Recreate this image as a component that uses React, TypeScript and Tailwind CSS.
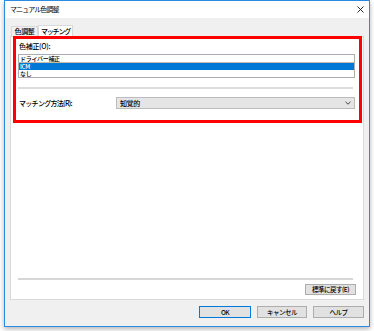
const jp = "font-['Noto_Sans_CJK_JP',sans-serif]";

function DlgButton({ label, w, primary }: { label: string; w: string; primary?: boolean }) {
  return (
    <div
      className={`${w} h-[12px] flex items-center justify-center bg-[#e1e1e1] border text-[6.5px] font-medium leading-none tracking-[-0.5px] ${
        primary ? 'border-[#0078d7]' : 'border-[#adadad]'
      }`}>
      {label}
    </div>
  );
}

export default function App() {
  return (
    <div className={`w-[374px] h-[331px] bg-white pl-[4px] text-black ${jp}`}>
      <div className="w-[366px] h-[327px] border border-[#2b8be0] bg-[#f0f0f0] flex flex-col shadow-[0_2px_5px_rgba(0,0,0,0.3)]">
        {/* title bar */}
        <div className="h-[17px] bg-white flex items-center justify-between pl-[5px] pr-[5px]">
          <span className="text-[7px] tracking-[-0.9px] leading-none">マニュアル色調整</span>
          <svg width="7" height="7" viewBox="0 0 7 7">
            <path d="M0.5 0.5 L6.5 6.5 M6.5 0.5 L0.5 6.5" stroke="#111" strokeWidth="0.9" />
          </svg>
        </div>

        <div className="flex-1 flex flex-col px-[5px] pt-[6px]">
          {/* tabs */}
          <div className="flex items-end h-[12px] ml-[1px]">
            <div className="w-[27px] h-[10px] border border-b-0 border-[#d9d9d9] flex items-center justify-center text-[7px] font-medium leading-none tracking-[-0.4px]">
              色調整
            </div>
            <div className="w-[35px] h-[12px] -mb-px relative z-10 bg-white border border-b-0 border-[#d9d9d9] flex items-center justify-center text-[7px] font-medium leading-none tracking-[-1.2px]">
              マッチング
            </div>
          </div>

          {/* tab panel */}
          <div className="h-[264px] bg-white border border-[#d9d9d9] flex flex-col">
            <div className="-mt-px ml-[2px] w-[349px] h-[87px] border-[3px] border-[#f00] relative z-20 flex flex-col pl-[2px] pt-[3px]">
              <div className="pl-[1px] text-[7px] font-medium leading-[8px] tracking-[-0.3px]">色補正(O):</div>
              <div className="mt-[4px] w-[337px] h-[24px] border border-[#abadb3] flex flex-col text-[6px] font-medium leading-[6px] tracking-[-0.3px]">
                <div className="h-[7px] flex items-center pl-[1px]">ドライバー補正</div>
                <div className="h-[1px] bg-[#c9b9a9]" />
                <div className="h-[7px] flex items-center pl-[1px] bg-[#0078d7] text-white">ICM</div>
                <div className="h-[7px] flex items-center pl-[1px]">なし</div>
              </div>
              <div className="mt-[9px] w-[335px] h-[2px] bg-[#dcdcdc]" />
              <div className="mt-[8px] flex items-center">
                <div className="w-[98px] pl-[1px] text-[7px] font-medium leading-none tracking-[-0.7px]">マッチング方法(R):</div>
                <div className="w-[239px] h-[12px] bg-[#e5e5e5] border border-[#bcbcbc] flex items-center justify-between pl-[3px] pr-[3px] text-[7px] font-medium leading-none tracking-[-0.4px]">
                  <span>知覚的</span>
                  <svg width="6" height="4" viewBox="0 0 6 4">
                    <path d="M0.5 0.8 L3 3.2 L5.5 0.8" fill="none" stroke="#333" strokeWidth="0.9" />
                  </svg>
                </div>
              </div>
            </div>

            <div className="flex-1" />
            <div className="ml-[7px] w-[335px] h-[2px] bg-[#d6d6d6]" />
            <div className="flex justify-end pr-[7px] mt-[4px] mb-[4px]">
              <div className="w-[51px] h-[11px] bg-[#e1e1e1] border border-[#adadad] flex items-center justify-center text-[6.5px] font-medium leading-none tracking-[-0.5px]">
                標準に戻す(E)
              </div>
            </div>
          </div>

          {/* bottom buttons */}
          <div className="flex justify-end gap-[6px] mt-[6px]">
            <DlgButton label="OK" w="w-[52px]" primary />
            <DlgButton label="キャンセル" w="w-[50px]" />
            <DlgButton label="ヘルプ" w="w-[51px]" />
          </div>
        </div>
      </div>
    </div>
  );
}
